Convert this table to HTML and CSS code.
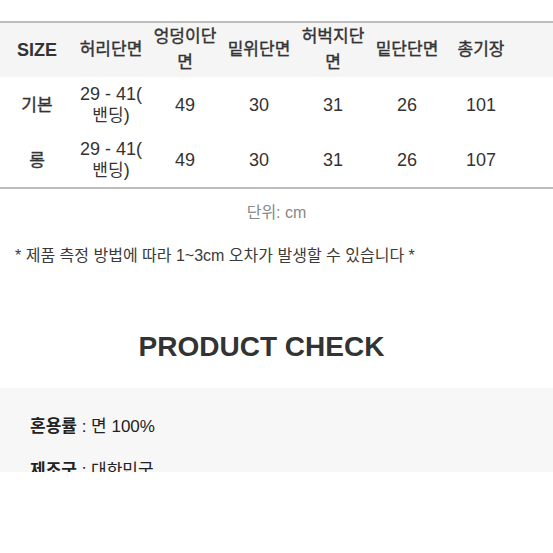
FILE: index.html
```html
<!DOCTYPE html>
<html lang="ko">
<head>
<meta charset="utf-8">
<title>Size</title>
<link rel="stylesheet" href="styles.css">
</head>
<body>
<div class="page">
  <table class="size-table">
    <colgroup>
      <col class="c"><col class="c"><col class="c"><col class="c"><col class="c"><col class="c"><col class="c"><col>
    </colgroup>
    <thead>
      <tr class="head-row">
        <th class="th-size">SIZE</th>
        <th>허리단면</th>
        <th>엉덩이단면</th>
        <th>밑위단면</th>
        <th>허벅지단면</th>
        <th>밑단단면</th>
        <th>총기장</th>
        <th class="filler"></th>
      </tr>
    </thead>
    <tbody>
      <tr class="row-a">
        <td class="ko">기본</td>
        <td>29 - 41(<br><span class="ko">밴딩</span>)</td>
        <td>49</td>
        <td>30</td>
        <td>31</td>
        <td>26</td>
        <td>101</td>
        <td class="filler"></td>
      </tr>
      <tr class="row-b">
        <td class="ko">롱</td>
        <td>29 - 41(<br><span class="ko">밴딩</span>)</td>
        <td>49</td>
        <td>30</td>
        <td>31</td>
        <td>26</td>
        <td>107</td>
        <td class="filler"></td>
      </tr>
    </tbody>
  </table>
  <p class="unit">단위: cm</p>
  <p class="note">* 제품 측정 방법에 따라 1~3cm 오차가 발생할 수 있습니다 *</p>
  <h2 class="title">PRODUCT CHECK</h2>
  <div class="spec">
    <p class="spec-line"><b class="spec-key">혼용률</b> : 면 100%</p>
    <p class="spec-line"><b class="spec-key">제조국</b> : 대한민국</p>
  </div>
</div>
</body>
</html>
```

FILE: styles.css
```css
html, body {
  margin: 0;
  padding: 0;
  background: #ffffff;
}
body {
  font-family: "Liberation Sans", "Noto Sans CJK KR", sans-serif;
  color: #333333;
}
.page {
  height: 472px;
  overflow: hidden;
  padding-top: 21px;
  box-sizing: border-box;
}
.size-table {
  width: 100%;
  border-collapse: collapse;
  table-layout: fixed;
  border-top: 2px solid #bdbdbd;
  border-bottom: 2px solid #bdbdbd;
}
.size-table col.c {
  width: 74px;
}
.size-table th {
  background: #f5f5f5;
  height: 54px;
  padding: 0 3px;
  font-size: 17px;
  font-weight: 400;
  -webkit-text-stroke: 0.4px #333333;
  line-height: 26px;
  color: #333333;
  text-align: center;
  vertical-align: middle;
}
.size-table th.th-size {
  font-size: 18px;
  font-weight: 700;
  -webkit-text-stroke: 0;
}
.size-table td {
  padding: 0 3px;
  font-size: 18px;
  line-height: 21px;
  text-align: center;
  vertical-align: middle;
  color: #333333;
}
.size-table .ko {
  font-size: 17px;
}
.size-table td.ko {
  font-weight: 400;
  -webkit-text-stroke: 0.4px #333333;
}
.row-a td {
  height: 56px;
}
.row-b td {
  height: 54px;
}
.unit {
  margin: 12px 0 0;
  font-size: 16px;
  line-height: 24px;
  text-align: center;
  color: #888888;
}
.note {
  margin: 20px 0 0;
  padding-left: 15px;
  font-size: 16px;
  line-height: 22px;
  color: #3a3a3a;
}
.title {
  margin: 64px 0 0;
  padding-right: 30px;
  font-size: 28px;
  line-height: 32px;
  font-weight: 700;
  text-align: center;
  color: #333333;
}
.spec {
  margin-top: 25px;
  background: #f7f7f7;
  padding: 27px 0 0 30px;
  height: 200px;
}
.spec-line {
  margin: 0 0 20px;
  font-size: 17px;
  line-height: 24px;
  color: #222222;
}
.spec-key {
  font-weight: 700;
}
```
